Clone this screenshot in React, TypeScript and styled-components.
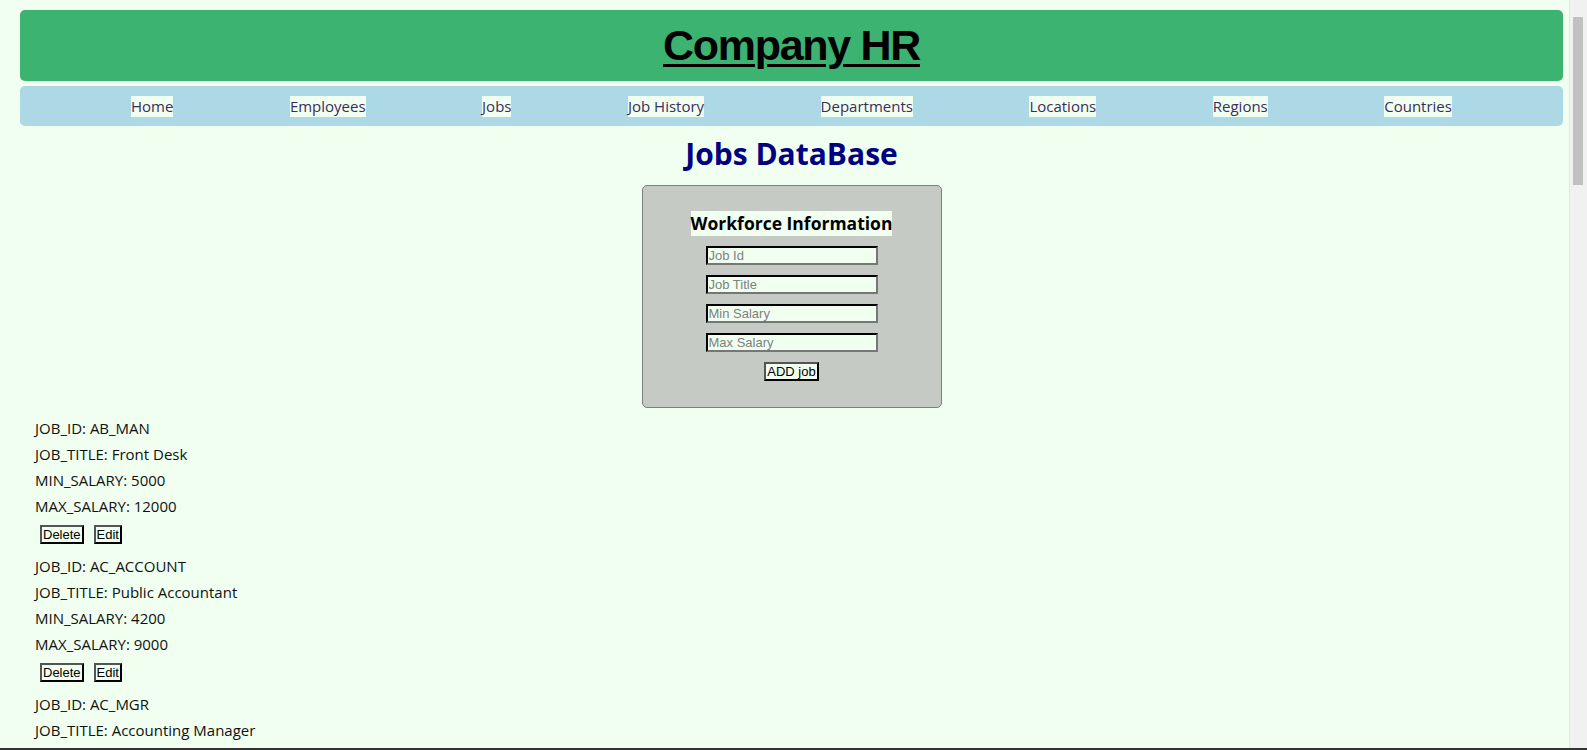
import React from 'react';
import styled, { createGlobalStyle } from 'styled-components';

const GlobalStyle = createGlobalStyle`
  body {
    margin: 0;
    background: #f0fff0;
    font-family: 'Open Sans', 'Noto Sans', sans-serif;
  }
`;

const Page = styled.div`
  padding: 10px 24px 0 20px;
`;

const Header = styled.header`
  height: 71px;
  display: flex;
  align-items: center;
  justify-content: center;
  background: #3cb371;
  border-radius: 5px;
`;

const Brand = styled.h1`
  margin: 0;
  font-family: 'Liberation Sans', Arial, sans-serif;
  font-size: 43px;
  font-weight: 700;
  letter-spacing: -1.3px;
  text-decoration: underline;
  text-decoration-thickness: 3px;
  text-underline-offset: 4px;
  color: #000;
`;

const Nav = styled.nav`
  margin-top: 5px;
  height: 40px;
  padding: 0 111px;
  display: flex;
  align-items: center;
  justify-content: space-between;
  background: #add8e6;
  border-radius: 5px;
`;

const NavLink = styled.a`
  background: #f0fff0;
  color: #3b2c60;
  font-size: 15px;
  line-height: 21px;
  text-decoration: none;
  cursor: pointer;
`;

const Title = styled.h2`
  margin: 11px 0 14px;
  text-align: center;
  color: #000080;
  font-size: 30px;
  line-height: 34px;
  font-weight: 700;
`;

const FormCard = styled.form`
  box-sizing: border-box;
  width: 300px;
  margin: 0 auto;
  padding: 25px 0 26px;
  display: flex;
  flex-direction: column;
  align-items: center;
  gap: 10px;
  background: #c5cac4;
  border: 1px solid #7d807d;
  border-radius: 5px;
`;

const FormHeading = styled.h3`
  margin: 0;
  background: #f0fff0;
  font-size: 17.5px;
  line-height: 25px;
  font-weight: 700;
  color: #000;
`;

const Field = styled.input`
  box-sizing: border-box;
  width: 172px;
  height: 19px;
  padding: 0 1px;
  background: #f0fff0;
  border: 2px inset #767676;
  border-top-color: #222;
  border-left-color: #222;
  font-family: 'Liberation Sans', Arial, sans-serif;
  font-size: 13px;
  &::placeholder {
    color: #808080;
  }
`;

const Button = styled.button`
  box-sizing: border-box;
  height: 19px;
  padding: 0 1px;
  white-space: nowrap;
  background: #f0fff0;
  border: 2px outset #444;
  border-top-color: #000;
  border-left-color: #000;
  font-family: 'Liberation Sans', Arial, sans-serif;
  font-size: 13px;
  line-height: 15px;
  color: #000;
  cursor: pointer;
`;

const JobList = styled.div`
  margin-top: 7px;
  padding-left: 15px;
`;

const JobLine = styled.div`
  font-size: 15px;
  line-height: 26px;
  color: #111;
`;

const Actions = styled.div`
  display: flex;
  gap: 10px;
  padding: 6px 0 9px 5px;
`;

/* browser chrome seen in the screenshot: scrollbar + bottom frame edge */
const ScrollTrack = styled.div`
  position: fixed;
  top: 0;
  right: 0;
  width: 17px;
  height: 100vh;
  background: #f1f1f1;
  border-left: 1px solid #e6e6e6;
`;

const ScrollThumb = styled.div`
  position: absolute;
  top: 17px;
  left: 3px;
  width: 10px;
  height: 168px;
  background: #c1c1c1;
`;

const FrameEdge = styled.div`
  position: fixed;
  left: 0;
  bottom: 0;
  width: 100%;
  height: 2px;
  background: #333;
`;

const jobs = [
  { id: 'AB_MAN', title: 'Front Desk', min: 5000, max: 12000 },
  { id: 'AC_ACCOUNT', title: 'Public Accountant', min: 4200, max: 9000 },
  { id: 'AC_MGR', title: 'Accounting Manager', min: 8200, max: 16000 },
  { id: 'AD_ASST', title: 'Administration Assistant', min: 3000, max: 6000 },
];

const links = ['Home', 'Employees', 'Jobs', 'Job History', 'Departments', 'Locations', 'Regions', 'Countries'];

const App = () => {
  return (
    <Page>
      <GlobalStyle />
      <Header>
        <Brand>Company HR</Brand>
      </Header>
      <Nav>
        {links.map((l) => (
          <NavLink key={l}>{l}</NavLink>
        ))}
      </Nav>
      <Title>Jobs DataBase</Title>
      <FormCard onSubmit={(e) => e.preventDefault()}>
        <FormHeading>Workforce Information</FormHeading>
        <Field placeholder='Job Id' />
        <Field placeholder='Job Title' />
        <Field placeholder='Min Salary' />
        <Field placeholder='Max Salary' />
        <Button type='submit'>ADD job</Button>
      </FormCard>
      <JobList>
        {jobs.map((j) => (
          <div key={j.id}>
            <JobLine>JOB_ID: {j.id}</JobLine>
            <JobLine>JOB_TITLE: {j.title}</JobLine>
            <JobLine>MIN_SALARY: {j.min}</JobLine>
            <JobLine>MAX_SALARY: {j.max}</JobLine>
            <Actions>
              <Button>Delete</Button>
              <Button>Edit</Button>
            </Actions>
          </div>
        ))}
      </JobList>
      <ScrollTrack>
        <ScrollThumb />
      </ScrollTrack>
      <FrameEdge />
    </Page>
  );
};

export default App;
